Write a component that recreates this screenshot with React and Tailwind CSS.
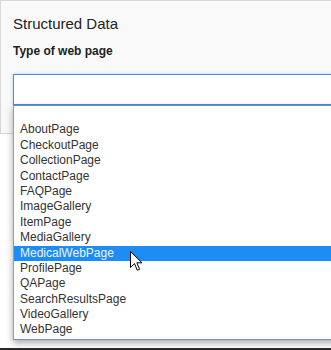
import React from "react";

const items = [
  "",
  "AboutPage",
  "CheckoutPage",
  "CollectionPage",
  "ContactPage",
  "FAQPage",
  "ImageGallery",
  "ItemPage",
  "MediaGallery",
  "MedicalWebPage",
  "ProfilePage",
  "QAPage",
  "SearchResultsPage",
  "VideoGallery",
  "WebPage",
];

export default function App() {
  return (
    <div
      className="relative w-[331px] h-[350px] overflow-hidden bg-white flex flex-col"
      style={{ fontFamily: '"Liberation Sans", Arial, sans-serif' }}
    >
      <div className="h-[134px] border-l border-t border-b border-[#d8d8d8] bg-[#f9f9f9] pl-[12px] pt-[14px]">
        <div className="text-[15px] leading-[18px] text-[#222]">Structured Data</div>
        <div className="mt-[11px] text-[12px] leading-[14px] font-bold text-[#222]">Type of web page</div>
        <div className="mt-[16px] w-[330px] h-[31px] bg-white border border-[#4a90d9] shadow-[0_0_3px_rgba(74,144,217,0.45)]" />
      </div>
      <div className="flex-1" />
      <div className="h-[2px] bg-[#2a2a2a]" />

      <div className="absolute left-[13px] top-[105px] w-[330px] bg-white border-l border-b border-t border-l-[#8a9cc4] border-b-[#6b8fd0] border-t-[#6b8fd0] shadow-[0_3px_7px_rgba(0,0,0,0.35)] pt-[1px]">
        {items.map((it, i) => (
          <div
            key={i}
            className={
              "h-[15.4px] leading-[15.4px] text-[12px] pl-[6px] whitespace-nowrap " +
              (it === "MedicalWebPage" ? "bg-[#1e8cf5] text-[#eef4ff]" : "text-[#333]")
            }
          >
            {it}
          </div>
        ))}
        <div className="h-[1px]" />
      </div>

      <svg
        className="absolute left-[130px] top-[251px]"
        width="13"
        height="21"
        viewBox="0 0 13 21"
      >
        <path
          d="M0.5 0.5 L0.5 16.5 L4.5 12.6 L7.3 19.3 L9.6 18.3 L6.9 11.8 L12 11.8 Z"
          fill="white"
          stroke="black"
          strokeWidth="1"
          strokeLinejoin="miter"
        />
      </svg>
    </div>
  );
}
